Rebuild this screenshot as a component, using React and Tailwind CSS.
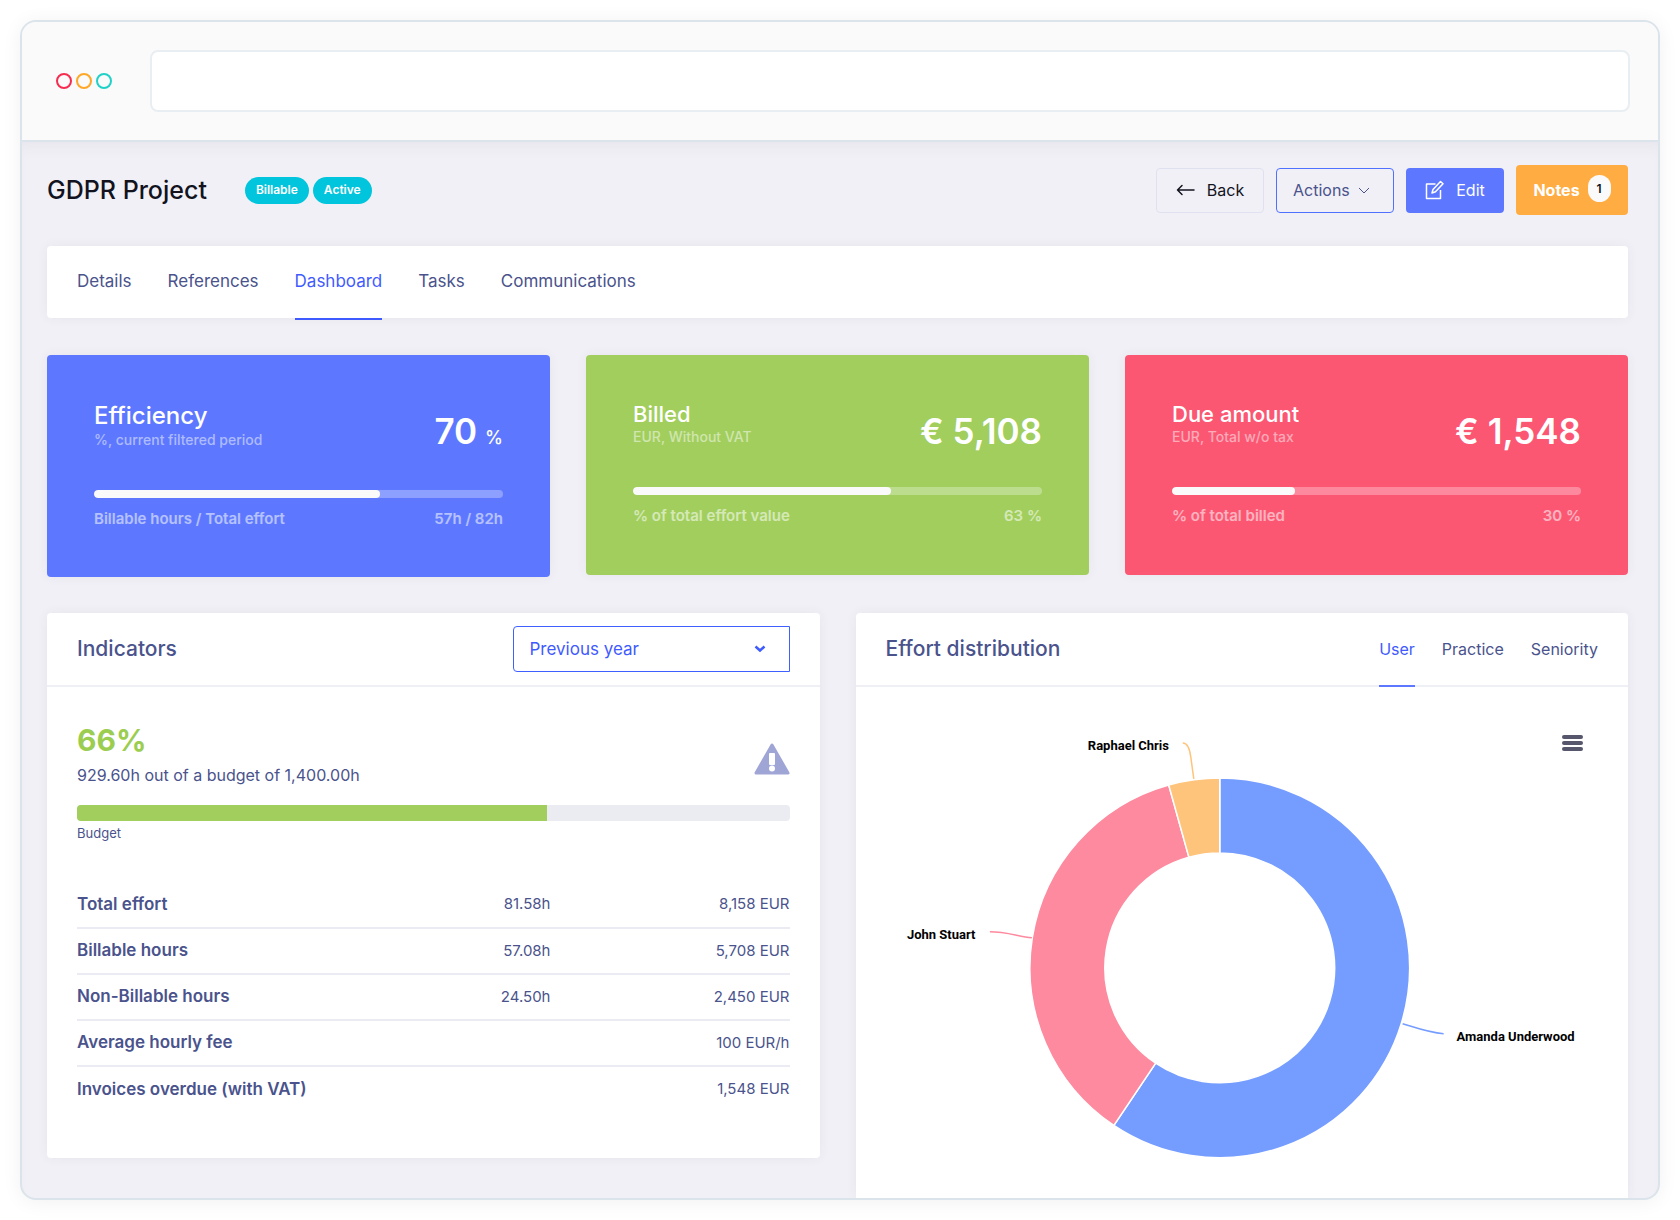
import React from 'react';

const tabs = ['Details', 'References', 'Dashboard', 'Tasks', 'Communications'];

const stats = [
    {
        title: 'Efficiency',
        titleClass: 'text-2xl leading-7',
        subtitle: '%, current filtered period',
        value: '70',
        unit: '%',
        percent: 70,
        label: 'Billable hours / Total effort',
        detail: '57h / 82h',
        color: 'bg-[#5d78ff]',
        height: 'h-[222px]',
    },
    {
        title: 'Billed',
        titleClass: 'text-[22px] leading-[25px]',
        subtitle: 'EUR, Without VAT',
        value: '€ 5,108',
        percent: 63,
        label: '% of total effort value',
        detail: '63 %',
        color: 'bg-[#a1ce5d]',
        height: 'h-[220px]',
    },
    {
        title: 'Due amount',
        titleClass: 'text-[22px] leading-[25px]',
        subtitle: 'EUR, Total w/o tax',
        value: '€ 1,548',
        percent: 30,
        label: '% of total billed',
        detail: '30 %',
        color: 'bg-[#fb5773]',
        height: 'h-[220px]',
    },
];

const rows = [
    { label: 'Total effort', hours: '81.58h', amount: '8,158 EUR' },
    { label: 'Billable hours', hours: '57.08h', amount: '5,708 EUR' },
    { label: 'Non-Billable hours', hours: '24.50h', amount: '2,450 EUR' },
    { label: 'Average hourly fee', hours: '', amount: '100 EUR/h' },
    { label: 'Invoices overdue (with VAT)', hours: '', amount: '1,548 EUR' },
];

// angles in degrees, clockwise from the top
const slices = [
    { name: 'Amanda Underwood', from: 0, to: 213.9, color: '#759dff', x: 601, y: 354, line: 'M547 337 C560 341 574 346 588 347' },
    { name: 'John Stuart', from: 213.9, to: 344.4, color: '#fd8a9e', x: 51, y: 252, line: 'M134 245 C149 245 161 249 176 251' },
    { name: 'Raphael Chris', from: 344.4, to: 360, color: '#ffc47b', x: 232, y: 63, line: 'M327 56 C332 56 334 62 335 70 L338 92' },
];

const CX = 364;
const CY = 281;

const point = (radius, angle) => {
    const rad = (angle * Math.PI) / 180;
    return `${CX + radius * Math.sin(rad)} ${CY - radius * Math.cos(rad)}`;
};

const slicePath = ({ from, to }) => {
    const large = to - from > 180 ? 1 : 0;
    return `M${point(190, from)} A190 190 0 ${large} 1 ${point(190, to)} L${point(115, to)} A115 115 0 ${large} 0 ${point(115, from)} Z`;
};

const StatCard = ({ stat }) => (
    <section className={`rounded px-[47px] pt-[47px] text-white shadow-[0_0_12px_rgba(82,63,105,0.06)] ${stat.color} ${stat.height}`}>
        <div className="flex justify-between">
            <div>
                <h2 className={`font-medium ${stat.titleClass}`}>{stat.title}</h2>
                <p className="text-sm leading-5 font-medium text-white/50">{stat.subtitle}</p>
            </div>
            <p className="flex items-baseline gap-2 pt-[13px] text-[35px] leading-8 font-semibold">
                {stat.value}
                {stat.unit && <span className="text-lg leading-4 font-medium">{stat.unit}</span>}
            </p>
        </div>
        <div className="mt-10 h-2 overflow-hidden rounded bg-white/30">
            <div className="h-full rounded bg-[#fafafa]" style={{ width: `${stat.percent}%` }} />
        </div>
        <div className="mt-[11px] flex justify-between text-[15px] leading-5 font-semibold text-white/55">
            <span>{stat.label}</span>
            <span>{stat.detail}</span>
        </div>
    </section>
);

const Indicators = () => (
    <section className="mb-10 rounded bg-white shadow-[0_0_12px_rgba(82,63,105,0.06)]">
        <header className="flex h-[74px] items-center justify-between border-b-2 border-[#efeff6] px-[30px]">
            <h2 className="text-[21px] font-medium">Indicators</h2>
            <div className="relative w-[277px]">
                <select
                    aria-label="Period"
                    className="h-[46px] w-full appearance-none rounded-l border border-[#3f60ff] bg-white px-4 pt-[2px] text-[17px] text-[#3f5bff]"
                >
                    <option>Previous year</option>
                </select>
                <svg className="pointer-events-none absolute top-[19px] right-6 h-2 w-3" viewBox="0 0 12 8" fill="none" stroke="#3f5bff" strokeWidth="2.500">
                    <path d="M1.500 1.500 6 5.500l4.500-4" />
                </svg>
            </div>
        </header>
        <div className="px-[30px] pt-8 pb-[42px]">
            <div className="flex items-end justify-between">
                <div>
                    <p className="text-[30px] leading-[42px] font-bold text-[#9bcd50]">66%</p>
                    <p className="mt-[2px] text-base leading-6">929.60h out of a budget of 1,400.00h</p>
                </div>
                <svg className="mb-3 h-8 w-9" viewBox="0 0 36 32">
                    <path d="M18 2 34 30H2Z" fill="#9fa6d6" stroke="#9fa6d6" strokeWidth="3" strokeLinejoin="round" />
                    <rect x="15" y="10" width="6" height="12" rx="1" fill="#fff" />
                    <circle cx="18" cy="25.500" r="3" fill="#fff" />
                </svg>
            </div>
            <div className="mt-[18px] h-4 overflow-hidden rounded bg-[#ebebf2]">
                <div className="h-full w-[66%] bg-[#a1ce5d]" />
            </div>
            <p className="mt-[2px] text-[13px] leading-5">Budget</p>
            <table className="mt-[39px] w-full text-[15px]">
                <tbody>
                    {rows.map((row) => (
                        <tr key={row.label} className="h-[46px] border-b-2 border-[#ebecf3] last:border-b-0">
                            <th scope="row" className="text-left text-[17px] font-semibold">{row.label}</th>
                            <td className="w-[120px] text-right">{row.hours}</td>
                            <td className="w-[239px] text-right">{row.amount}</td>
                        </tr>
                    ))}
                </tbody>
            </table>
        </div>
    </section>
);

const EffortDistribution = () => (
    <section className="rounded-t bg-white shadow-[0_0_12px_rgba(82,63,105,0.06)]">
        <header className="flex h-[74px] justify-between border-b-2 border-[#efeff6] px-[30px]">
            <h2 className="self-center text-[21px] font-medium">Effort distribution</h2>
            <nav className="flex gap-[27px] text-base">
                <a href="#user" className="-mb-[2px] flex items-center border-b-2 border-[#5d78ff] text-[#3f5bff]">User</a>
                <a href="#practice" className="flex items-center">Practice</a>
                <a href="#seniority" className="flex items-center">Seniority</a>
            </nav>
        </header>
        <div className="relative">
            <svg className="block w-full" viewBox="0 0 773 511">
                {slices.map((slice) => (
                    <g key={slice.name}>
                        <path d={slicePath(slice)} fill={slice.color} stroke="#fff" strokeWidth="1.500" />
                        <path d={slice.line} fill="none" stroke={slice.color} strokeWidth="1.500" />
                        <text x={slice.x} y={slice.y} className="fill-black font-[Roboto,sans-serif] text-[13px] font-bold">
                            {slice.name}
                        </text>
                    </g>
                ))}
            </svg>
            <button type="button" aria-label="Chart menu" className="absolute top-12 right-[45px] flex flex-col gap-[2px]">
                <span className="h-1 w-[21px] rounded-sm bg-[#56566c]" />
                <span className="h-1 w-[21px] rounded-sm bg-[#56566c]" />
                <span className="h-1 w-[21px] rounded-sm bg-[#56566c]" />
            </button>
        </div>
    </section>
);

export default function App() {
    return (
        <div className="min-h-screen bg-white p-5 font-[Inter,sans-serif] text-[#4a538c]">
            <div className="overflow-hidden rounded-2xl border-2 border-[#dbe4eb] bg-[#f1f0f6] shadow-[0_2px_20px_rgba(0,0,0,0.06)]">
                <div className="flex h-[120px] items-center border-b-2 border-[#dbe4eb] bg-[#fafafa] pr-7 pl-[34px]">
                    <div className="flex gap-1">
                        <span className="h-4 w-4 rounded-full border-2 border-[#f62d51]" />
                        <span className="h-4 w-4 rounded-full border-2 border-[#ffa726]" />
                        <span className="h-4 w-4 rounded-full border-2 border-[#1fd1c7]" />
                    </div>
                    <input
                        type="text"
                        aria-label="Address"
                        className="ml-[38px] h-[62px] flex-1 rounded-lg border-2 border-[#e8eef2] bg-white px-4 outline-none"
                    />
                </div>

                <main className="pt-[23px] pr-[30px] pl-[25px] shadow-[inset_0_12px_16px_-8px_rgba(60,60,100,0.06)]">
                    <div className="flex h-[50px] items-center justify-between">
                        <div className="flex items-center">
                            <h1 className="text-[25px] leading-8 font-medium text-[#12131f]">GDPR Project</h1>
                            <div className="ml-[38px] flex gap-1 text-xs font-semibold text-white">
                                <span className="flex h-[27px] items-center rounded-full bg-[#00c5dc] px-[11px]">Billable</span>
                                <span className="flex h-[27px] items-center rounded-full bg-[#00c5dc] px-[11px]">Active</span>
                            </div>
                        </div>
                        <div className="flex items-center gap-3">
                            <button type="button" className="flex h-[45px] w-[108px] items-center justify-center gap-3 rounded border border-[#e0e1f0] text-[#12131f]">
                                <svg className="h-3 w-[19px]" viewBox="0 0 19 12" fill="none" stroke="currentColor" strokeWidth="1.500" strokeLinecap="round" strokeLinejoin="round">
                                    <path d="M18 6H1.500M6 1.500 1.500 6 6 10.500" />
                                </svg>
                                Back
                            </button>
                            <button type="button" className="flex h-[45px] w-[118px] items-center gap-2 rounded border border-[#5070ff] px-4">
                                Actions
                                <svg className="h-[7px] w-3" viewBox="0 0 12 7" fill="none" stroke="currentColor">
                                    <path d="m1 1 5 5 5-5" />
                                </svg>
                            </button>
                            <button type="button" className="flex h-[45px] w-[98px] items-center justify-center gap-3 rounded bg-[#5d78ff] text-white">
                                <svg className="h-5 w-[19px]" viewBox="0 0 19 20" fill="none" stroke="currentColor" strokeWidth="1.500" strokeLinejoin="round">
                                    <path d="M10.500 4H1.500v14.500h14V10" />
                                    <path d="m7 13 1-3.500 7.500-8 2.500 2.300-7.500 8z" />
                                </svg>
                                Edit
                            </button>
                            <button type="button" className="flex h-[50px] w-[112px] items-center justify-center gap-2 rounded bg-[#ffac42] font-bold text-white">
                                Notes
                                <span className="mb-[3px] flex h-[27px] w-[23px] items-center justify-center rounded-full bg-[#fafafa] text-xs font-semibold text-[#12131f]">1</span>
                            </button>
                        </div>
                    </div>

                    <nav className="mt-[31px] flex h-[72px] gap-9 rounded bg-white px-[30px] text-[17px] shadow-[0_0_12px_rgba(82,63,105,0.06)]">
                        {tabs.map((tab) => (
                            <a
                                key={tab}
                                href={`#${tab.toLowerCase()}`}
                                className={`-mb-[2px] flex items-center border-b-2 ${tab === 'Dashboard' ? 'border-[#3f5bff] text-[#3f5bff]' : 'border-transparent'}`}
                            >
                                {tab}
                            </a>
                        ))}
                    </nav>

                    <div className="mt-[37px] grid grid-cols-3 items-start gap-9">
                        {stats.map((stat) => (
                            <StatCard key={stat.title} stat={stat} />
                        ))}
                    </div>

                    <div className="mt-9 grid grid-cols-2 gap-9">
                        <Indicators />
                        <EffortDistribution />
                    </div>
                </main>
            </div>
        </div>
    );
}
